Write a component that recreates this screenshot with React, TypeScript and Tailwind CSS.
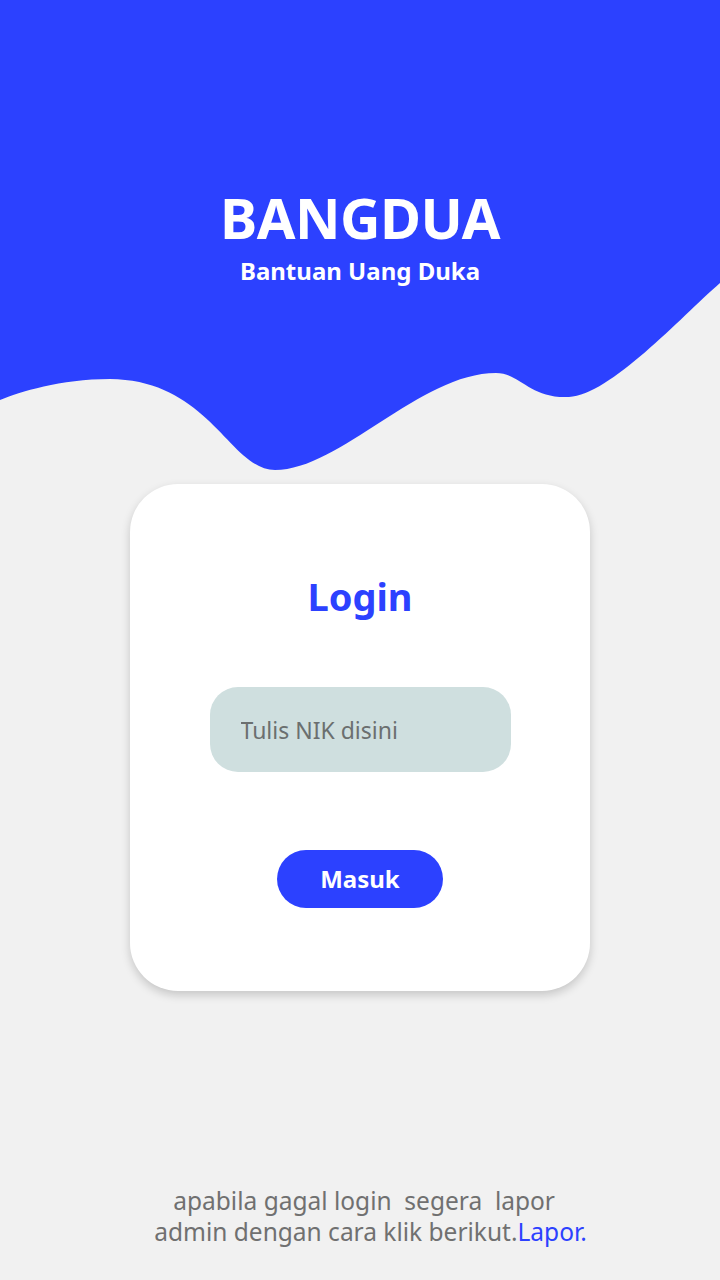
import React from 'react';

const font = { fontFamily: '"Noto Sans", "Open Sans", sans-serif' };

function Wave() {
  return (
    <svg
      className="absolute inset-0 h-full w-full"
      viewBox="0 0 720 472"
      preserveAspectRatio="none"
    >
      <path
        d="M0 0 H720 V283 C680 318 610 395 569 397 C530 399 520 373 496 373 C420 373 340 470 275 470 C230 470 210 380 110 379 C60 379 20 392 0 400 Z"
        fill="#2c41ff"
      />
    </svg>
  );
}

export default function App() {
  return (
    <div className="min-h-[1280px] w-full bg-[#f1f1f1] flex flex-col items-center" style={font}>
      {/* Header */}
      <div className="relative w-full h-[472px]">
        <Wave />
        <div className="relative flex flex-col items-center pt-[181px]">
          <h1 className="text-[56px] leading-[72px] font-bold text-white tracking-[-0.5px]">BANGDUA</h1>
          <p className="mt-[2px] text-[24px] leading-[32px] font-bold text-white">Bantuan Uang Duka</p>
        </div>
      </div>

      {/* Card */}
      <div className="mt-[12px] w-[460px] h-[507px] bg-white rounded-[48px] shadow-[0_4px_10px_rgba(0,0,0,0.18)] flex flex-col items-center">
        <h2 className="mt-[86px] text-[38px] leading-[52px] font-bold text-[#2c41ff]">Login</h2>
        <input
          type="text"
          placeholder="Tulis NIK disini"
          className="mt-[65px] w-[301px] h-[85px] rounded-[28px] bg-[#cfdfdf] px-[31px] text-[23px] text-[#555] placeholder:text-[#6b6f6f] outline-none"
        />
        <button className="mt-[78px] w-[166px] h-[58px] rounded-full bg-[#2c41ff] text-white text-[24px] font-bold">
          Masuk
        </button>
      </div>

      {/* Footer */}
      <p className="mt-[194px] text-center text-[24.5px] leading-[31px] text-[#707070] pl-[21px]">
        <span className="whitespace-pre">apabila gagal login  segera  lapor  </span>
        <br />
        admin dengan cara klik berikut.<a href="#" className="text-[#2c41ff]">Lapor.</a>
      </p>
    </div>
  );
}
